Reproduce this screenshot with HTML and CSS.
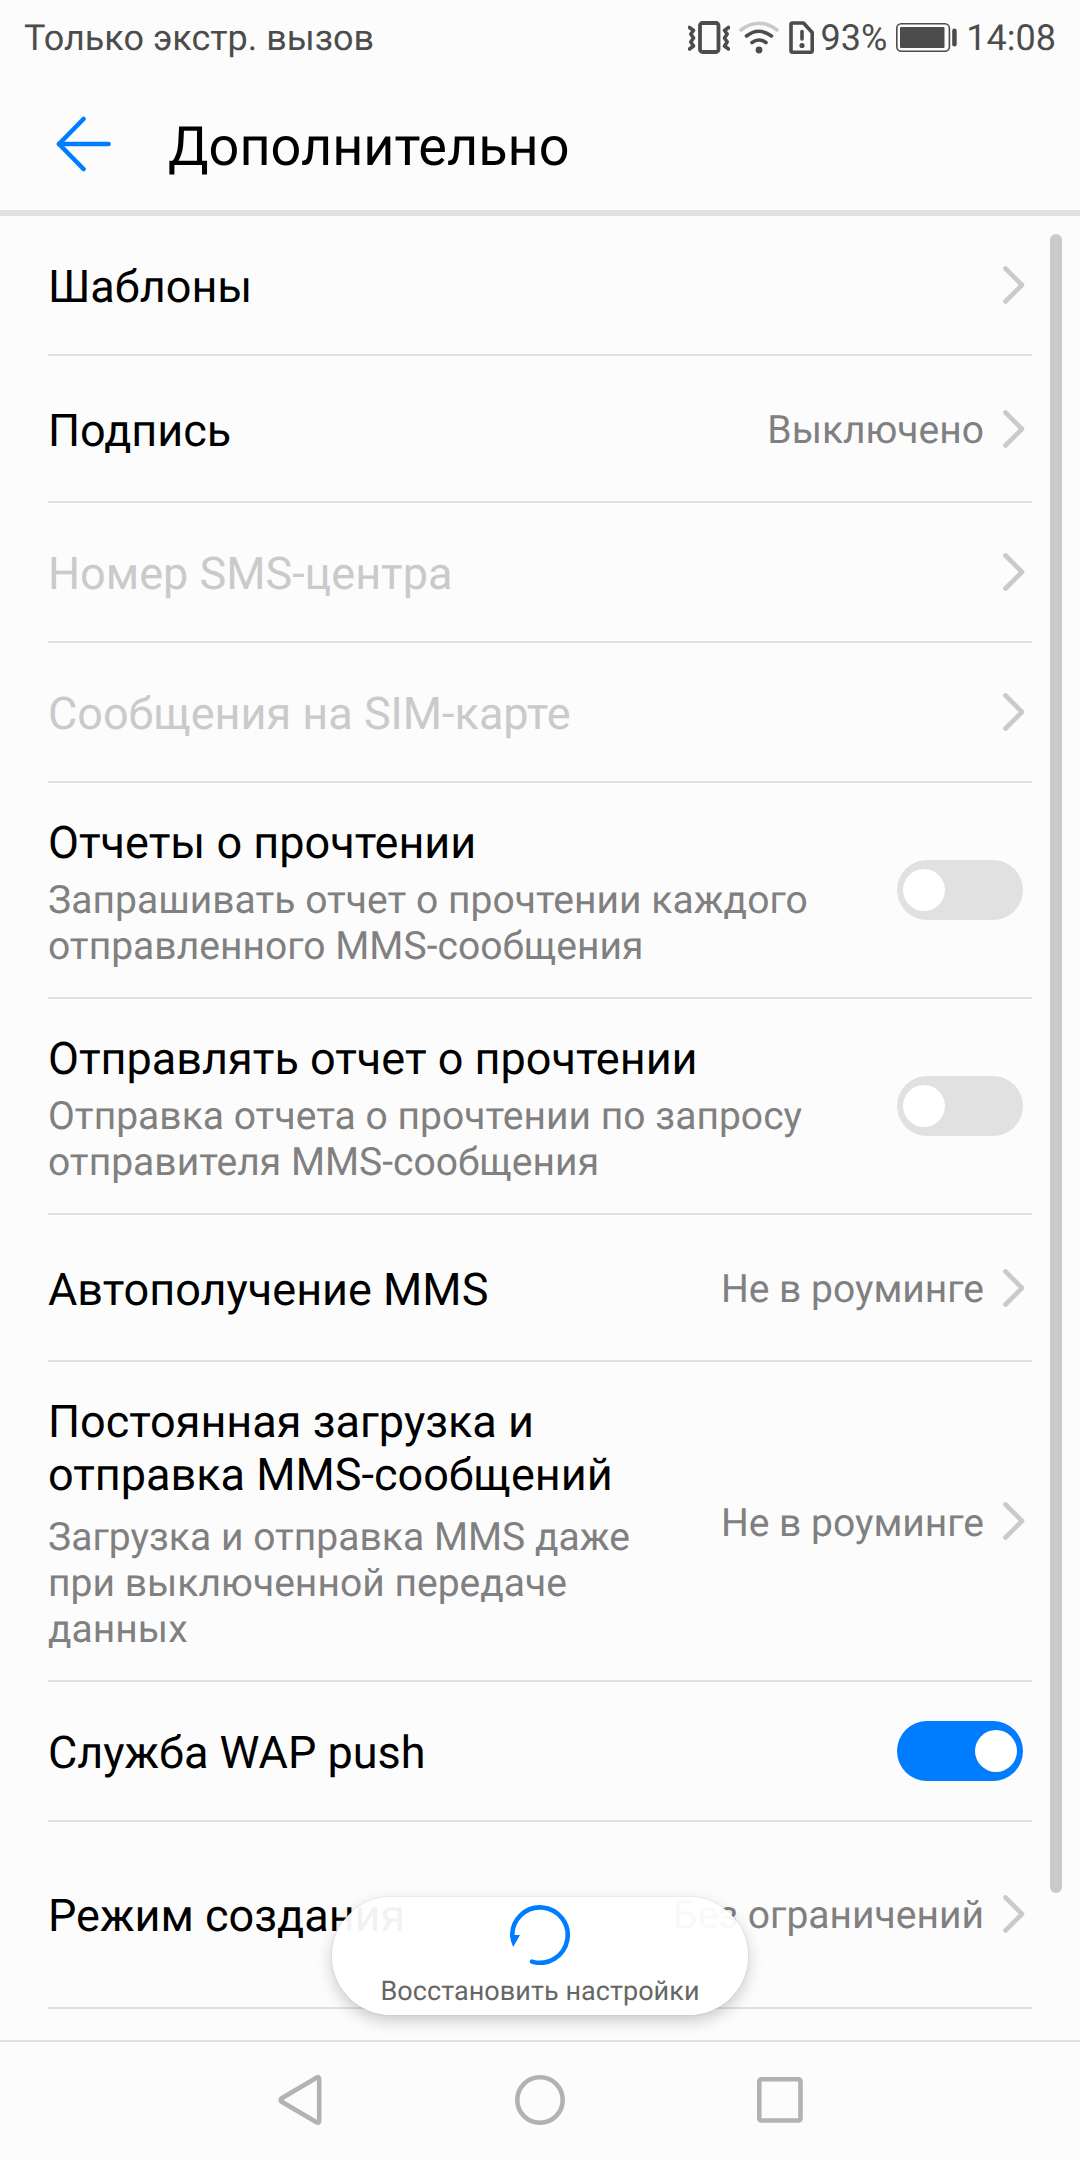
FILE: index.html
```
<!DOCTYPE html>
<html lang="ru">
<head>
  <meta charset="UTF-8" />
  <meta name="viewport" content="width=device-width, initial-scale=1.0" />
  <title>Дополнительно</title>
  <link rel="stylesheet" href="styles.css">
</head>
<body>
  <!-- Shared icon -->
  <svg class="sprite" width="0" height="0">
    <symbol id="chevron" viewBox="0 0 22 38">
      <path d="M2.5 2.5 L19 19 L2.5 35.5" fill="none" stroke="#cacaca" stroke-width="4.6" stroke-linecap="round" stroke-linejoin="round" />
    </symbol>
  </svg>

  <div class="status-bar">
    <span class="carrier">Только экстр. вызов</span>
    <svg class="icon-vibrate" width="42" height="34" viewBox="0 0 42 34" fill="none" stroke="#4c4c4c">
      <rect x="12" y="2" width="18.5" height="29" rx="2.5" stroke-width="3.8" />
      <path d="M1.5 6.5 L5.5 9.5 L2.8 13 L5.5 17 L2.8 21 L5.5 25 L1.5 28" stroke-width="3.6" stroke-linejoin="round" stroke-linecap="round" />
      <path d="M40.5 6.5 L36.5 9.5 L39.2 13 L36.5 17 L39.2 21 L36.5 25 L40.5 28" stroke-width="3.6" stroke-linejoin="round" stroke-linecap="round" />
    </svg>
    <svg class="icon-wifi" width="40" height="34" viewBox="0 0 40 34" fill="none" stroke="#4c4c4c" stroke-width="3.6" stroke-linecap="round">
      <path d="M2 9 Q20 -4.5 38 9" stroke="#cacaca" />
      <path d="M7.5 15 Q20 5.5 32.5 15" />
      <path d="M13 21.5 Q20 16.5 27 21.5" />
      <circle cx="20" cy="29" r="3.4" fill="#4c4c4c" stroke="none" />
    </svg>
    <svg class="icon-sim" width="26" height="34" viewBox="0 0 26 34" fill="none" stroke="#4c4c4c" stroke-width="3.6" stroke-linejoin="round" stroke-linecap="round">
      <path d="M3.5 2 H14.5 L23.2 11.5 V29.5 Q23.2 31.2 21.5 31.2 H3.5 Q2 31.2 2 29.5 V3.5 Q2 2 3.5 2 Z" />
      <path d="M13 10.5 V18" />
      <circle cx="13" cy="24.5" r="2.6" fill="#4c4c4c" stroke="none" />
    </svg>
    <span class="percent">93%</span>
    <svg class="icon-battery" width="62" height="30" viewBox="0 0 62 30">
      <rect x="0.8" y="0.8" width="52.6" height="27.4" rx="4.5" fill="none" stroke="#4c4c4c" stroke-width="1.6" />
      <rect x="4" y="4" width="44.5" height="21" rx="1" fill="#4c4c4c" />
      <rect x="56.2" y="5.5" width="4.5" height="18" rx="2.2" fill="#4c4c4c" />
    </svg>
    <span class="clock">14:08</span>
  </div>

  <header>
    <svg class="back" width="56" height="56" viewBox="0 0 56 56" fill="none" stroke="#007dff" stroke-width="4.6" stroke-linecap="round" stroke-linejoin="round">
      <path d="M3 28 H52.5" />
      <path d="M27.5 3 L3 28 L27.5 53" />
    </svg>
    <h1>Дополнительно</h1>
  </header>

  <main>
    <div class="row">
      <div class="text"><div class="title">Шаблоны</div></div>
      <svg class="chevron"><use href="#chevron" /></svg>
    </div>
    <div class="row medium">
      <div class="text"><div class="title">Подпись</div></div>
      <div class="value">Выключено</div>
      <svg class="chevron"><use href="#chevron" /></svg>
    </div>
    <div class="row disabled">
      <div class="text"><div class="title">Номер SMS-центра</div></div>
      <svg class="chevron"><use href="#chevron" /></svg>
    </div>
    <div class="row disabled">
      <div class="text"><div class="title">Сообщения на SIM-карте</div></div>
      <svg class="chevron"><use href="#chevron" /></svg>
    </div>
    <div class="row two-line">
      <div class="text">
        <div class="title">Отчеты о прочтении</div>
        <div class="summary">Запрашивать отчет о прочтении каждого отправленного MMS-сообщения</div>
      </div>
      <div class="switch"></div>
    </div>
    <div class="row two-line">
      <div class="text">
        <div class="title">Отправлять отчет о прочтении</div>
        <div class="summary">Отправка отчета о прочтении по запросу отправителя MMS-сообщения</div>
      </div>
      <div class="switch"></div>
    </div>
    <div class="row medium">
      <div class="text"><div class="title">Автополучение MMS</div></div>
      <div class="value">Не в роуминге</div>
      <svg class="chevron"><use href="#chevron" /></svg>
    </div>
    <div class="row tall">
      <div class="text">
        <div class="title">Постоянная загрузка и отправка MMS-сообщений</div>
        <div class="summary">Загрузка и отправка MMS даже при выключенной передаче данных</div>
      </div>
      <div class="value">Не в роуминге</div>
      <svg class="chevron"><use href="#chevron" /></svg>
    </div>
    <div class="row">
      <div class="text"><div class="title">Служба WAP push</div></div>
      <div class="switch on"></div>
    </div>
    <div class="row last">
      <div class="text"><div class="title">Режим создания</div></div>
      <div class="value">Без ограничений</div>
      <svg class="chevron"><use href="#chevron" /></svg>
    </div>

    <div class="scrollbar"></div>

    <button class="restore">
      <svg width="60" height="60" viewBox="0 0 60 60">
        <path d="M22 56.6 A27.7 27.7 0 1 0 2.3 31" fill="none" stroke="#007dff" stroke-width="4.6" stroke-linecap="round" />
        <path d="M0 30 H10 L3.2 42 Q0.3 36 0 30 Z" fill="#007dff" />
      </svg>
      <span>Восстановить настройки</span>
    </button>
  </main>

  <nav>
    <svg width="50" height="54" viewBox="0 0 50 54"><path d="M41.5 4.8 Q44.2 3 44.2 6.5 V47.5 Q44.2 51 41.5 49.2 L6.8 28.8 Q4.4 27 6.8 25.2 Z" /></svg>
    <svg width="50" height="54" viewBox="0 0 50 54"><circle cx="25" cy="27" r="22.7" /></svg>
    <svg width="50" height="54" viewBox="0 0 50 54"><rect x="4.3" y="6.3" width="41.2" height="41.2" rx="2" /></svg>
  </nav>
</body>
</html>
```

FILE: styles.css
```
* {
  margin: 0;
  padding: 0;
  box-sizing: border-box;
}

body {
  width: 1080px;
  height: 2160px;
  display: flex;
  flex-direction: column;
  font-family: Roboto, sans-serif;
  text-rendering: geometricPrecision;
  background-color: #fcfcfc;
  color: #000;
  overflow: hidden;
}

svg {
  display: block;
  flex-shrink: 0;
}

.sprite {
  position: absolute;
}

/* Status bar */
.status-bar {
  height: 72px;
  display: flex;
  align-items: center;
  padding: 3px 24px 0 24px;
  font-size: 36px;
  line-height: 42px;
  color: #4c4c4c;
}

.carrier {
  flex: 1;
}

.carrier,
.percent,
.clock {
  padding-top: 1px;
}

.icon-wifi {
  margin-left: 9px;
}

.icon-sim {
  margin-left: 10px;
}

.percent {
  margin-left: 6px;
}

.icon-battery {
  margin-left: 9px;
}

.clock {
  margin-left: 8px;
}

/* Header */
header {
  height: 144px;
  display: flex;
  align-items: center;
  padding: 6px 56px 0;
  border-bottom: 6px solid #e1e1e1;
}

h1 {
  margin-left: 56px;
  padding-top: 7px;
  font-size: 54px;
  font-weight: 400;
}

/* Settings list */
main {
  position: relative;
  flex: 1;
  padding: 0 48px;
}

.row {
  height: 140px;
  display: flex;
  align-items: center;
  border-bottom: 2px solid #e1e1e1;
}

.row.medium {
  height: 147px;
}

.row.two-line {
  height: 216px;
}

.row.tall {
  height: 320px;
}

.row.last {
  height: 187px;
  padding-bottom: 2px;
}

.text {
  flex: 1;
  padding-top: 3px;
}

.title {
  font-size: 45px;
  line-height: 53px;
}

.summary {
  margin-top: 8px;
  margin-bottom: -1px;
  font-size: 39px;
  line-height: 46px;
  letter-spacing: 0.03px;
  color: #808080;
}

.tall .summary {
  margin-top: 13px;
}

.disabled .title {
  color: #cacaca;
}

.value {
  margin-left: 40px;
  padding-top: 3px;
  font-size: 39px;
  line-height: 46px;
  color: #808080;
}

.chevron {
  width: 22px;
  height: 38px;
  margin-left: 19px;
  margin-right: 7px;
}

.switch {
  width: 126px;
  height: 60px;
  margin-left: 50px;
  margin-right: 9px;
  padding: 9px 6px;
  border-radius: 30px;
  background-color: #e1e1e1;
  display: flex;
}

.switch::before {
  content: "";
  width: 42px;
  height: 42px;
  border-radius: 50%;
  background-color: #fff;
}

.switch.on {
  background-color: #007dff;
  justify-content: flex-end;
}

.scrollbar {
  position: absolute;
  top: 18px;
  right: 18px;
  width: 12px;
  height: 1659px;
  border-radius: 6px;
  background-color: #cacaca;
}

/* Floating button */
.restore {
  position: absolute;
  left: 332px;
  bottom: 25px;
  width: 416px;
  height: 118px;
  display: flex;
  flex-direction: column;
  align-items: center;
  padding-top: 8px;
  border: none;
  border-radius: 59px;
  background-color: rgba(255, 255, 255, 0.95);
  box-shadow: 0 6px 16px rgba(0, 0, 0, 0.2), 0 0 2px rgba(0, 0, 0, 0.14);
  font-family: inherit;
  font-size: 27px;
  line-height: 32px;
  letter-spacing: 0.05px;
  color: #666;
  text-rendering: inherit;
}

.restore span {
  margin-top: 10px;
}

/* Navigation bar */
nav {
  height: 120px;
  display: flex;
  justify-content: center;
  align-items: center;
  gap: 190px;
  padding-bottom: 2px;
  border-top: 2px solid #e1e1e1;
}

nav svg {
  fill: none;
  stroke: #b2b2b2;
  stroke-width: 4.6;
}
```
